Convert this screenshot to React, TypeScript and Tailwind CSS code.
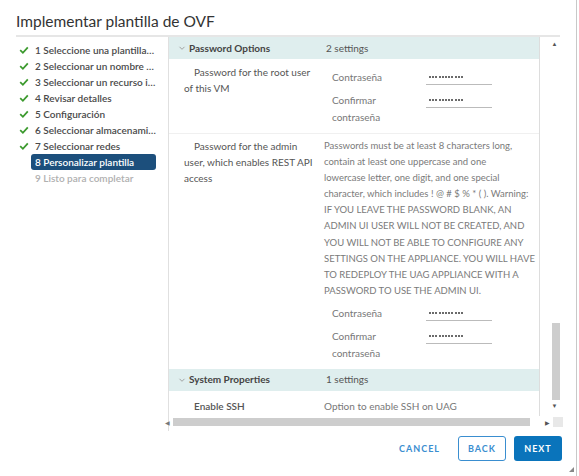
import React from "react";

const steps = [
  { label: "1 Seleccione una plantilla de OVF", done: true },
  { label: "2 Seleccionar un nombre y una carpeta", done: true },
  { label: "3 Seleccionar un recurso informático", done: true },
  { label: "4 Revisar detalles", done: true },
  { label: "5 Configuración", done: true },
  { label: "6 Seleccionar almacenamiento", done: true },
  { label: "7 Seleccionar redes", done: true },
  { label: "8 Personalizar plantilla", active: true },
  { label: "9 Listo para completar", pending: true },
];

const warning = [
  "Passwords must be at least 8 characters long,",
  "contain at least one uppercase and one",
  "lowercase letter, one digit, and one special",
  "character, which includes ! @ # $ % * ( ). Warning:",
  "IF YOU LEAVE THE PASSWORD BLANK, AN",
  "ADMIN UI USER WILL NOT BE CREATED, AND",
  "YOU WILL NOT BE ABLE TO CONFIGURE ANY",
  "SETTINGS ON THE APPLIANCE. YOU WILL HAVE",
  "TO REDEPLOY THE UAG APPLIANCE WITH A",
  "PASSWORD TO USE THE ADMIN UI.",
];

const Check = () => (
  <svg width="10" height="10" viewBox="0 0 10 10" className="shrink-0">
    <path d="M1.2 5.2 L3.9 7.8 L8.8 2.4" fill="none" stroke="#3c9a2e" strokeWidth="1.8" />
  </svg>
);

const Chevron = () => (
  <svg width="8" height="8" viewBox="0 0 8 8" className="shrink-0">
    <path d="M1.5 2.8 L4 5.3 L6.5 2.8" fill="none" stroke="#9a9a9a" strokeWidth="0.9" />
  </svg>
);

// masked value: eleven small dots
const Dots = () => (
  <div className="flex gap-[1.2px] pl-[3px] pt-[7px]">
    {Array.from({ length: 11 }).map((_, i) => (
      <div key={i} className="w-[2px] h-[2px] rounded-full bg-[#3a3a3a]" />
    ))}
  </div>
);

const PasswordField = ({ label, second }: { label: React.ReactNode; second?: boolean }) => (
  <div className={`flex items-start ${second ? "mt-[6px]" : ""}`}>
    <div className="w-[94px] leading-[17px] text-[#777]">{label}</div>
    <div className="w-[66px] h-[16px] border-b border-[#bbb]">
      <Dots />
    </div>
  </div>
);

const SectionHeader = ({ title, count }: { title: string; count: string }) => (
  <div className="flex items-center h-[22px] bg-[#dfeeee] pl-[9px]">
    <Chevron />
    <span className="ml-[3px] w-[137px] font-bold text-[#444]">{title}</span>
    <span className="text-[#555]">{count}</span>
  </div>
);

export default function App() {
  return (
    <div
      className="relative w-[579px] h-[476px] bg-white text-[10px] overflow-hidden"
      style={{ fontFamily: "Lato, 'Noto Sans', sans-serif" }}
    >
      <div className="w-[577px] h-full border-r border-[#c8c8c8] flex flex-col">
        {/* title */}
        <div className="pl-4 pr-[16px]">
          <div className="h-[37px] border-b-2 border-[#e6e6e6] pt-[11px] text-[15.5px] text-[#333] leading-[20px]">
            Implementar plantilla de OVF
          </div>
        </div>

        {/* body */}
        <div className="flex pl-4 pr-[16px] h-[394px]">
          {/* nav */}
          <div className="w-[153px] border-r border-[#e0e0e0] pt-[5px] shrink-0">
            {steps.map((s) => (
              <div key={s.label} className="flex items-center h-[16px]">
                <div className="w-[15px] pl-[3px] flex">{s.done && <Check />}</div>
                <div
                  className={`truncate w-[125px] h-[16px] leading-[16px] pl-[4px] rounded-[3px] font-semibold ${
                    s.active
                      ? "bg-[#1c4f7c] text-white"
                      : s.pending
                      ? "text-[#b0b0b0]"
                      : "text-[#4a4a4a]"
                  }`}
                >
                  {s.label}
                </div>
              </div>
            ))}
          </div>

          {/* content */}
          <div className="flex flex-col flex-1">
            <div className="flex flex-1 overflow-hidden">
              <div className="w-[371px] border-r border-[#ddd] overflow-hidden">
                <SectionHeader title="Password Options" count="2 settings" />

                <div className="flex pl-[15px] pt-[5px] pb-[7px] border-b border-[#f0f0f0]">
                  <div className="w-[140px] leading-[16px] text-[#555] indent-[10px] pr-[6px]">
                    Password for the root user of this VM
                  </div>
                  <div className="pt-[5px] pl-[8px]">
                    <PasswordField label="Contraseña" />
                    <PasswordField label={<>Confirmar<br />contraseña</>} second />
                  </div>
                </div>

                <div className="flex pl-[15px] pt-[4px] pb-[7px]">
                  <div className="w-[140px] leading-[16px] text-[#555] pr-[6px] whitespace-nowrap">
                    <span className="pl-[10px]">Password for the admin</span>
                    <br />
                    user, which enables REST API
                    <br />
                    access
                  </div>
                  <div className="w-[215px]">
                    <div className="leading-[16.1px] text-[9.5px] text-[#7a7a7a] whitespace-nowrap">
                      {warning.map((l) => (
                        <div key={l}>{l}</div>
                      ))}
                    </div>
                    <div className="pt-[6px] pl-[8px]">
                      <PasswordField label="Contraseña" />
                      <PasswordField label={<>Confirmar<br />contraseña</>} second />
                    </div>
                  </div>
                </div>

                <SectionHeader title="System Properties" count="1 settings" />
                <div className="flex pl-[25px] pt-[7px] leading-[16px]">
                  <div className="w-[130px] text-[#555] font-semibold">Enable SSH</div>
                  <div className="text-[#777]">Option to enable SSH on UAG</div>
                </div>
              </div>

              {/* vertical scrollbar */}
              <div className="w-[21px] flex flex-col items-center pt-[3px] pb-[6px]">
                <span className="text-[6px] leading-[8px] text-[#555] ml-[8px]">▲</span>
                <div className="flex-1 flex items-end justify-end w-full pr-[1px]">
                  <div className="w-[8px] h-[77px] bg-[#cdcdcd] mb-[2px]" />
                </div>
                <span className="text-[6px] leading-[8px] text-[#555] ml-[8px]">▼</span>
              </div>
            </div>

            {/* horizontal scrollbar */}
            <div className="flex items-center h-[12px] mb-[3px] -ml-[4px]">
              <span className="text-[6px] text-[#777] w-[8px]">◀</span>
              <div className="w-[357px] h-[8px] bg-[#cdcdcd]" />
              <span className="text-[6px] text-[#555] ml-[15px]">▶</span>
              <div className="w-[10px] h-[10px] bg-[#e8e8e8] ml-[3px]" />
            </div>
          </div>
        </div>

        {/* footer */}
        <div className="flex justify-end items-center gap-[8px] pr-[14px] pt-[5px]">
          <button className="h-[25px] px-[10px] text-[9px] font-bold tracking-[1px] text-[#3a8ed0]">CANCEL</button>
          <button className="h-[25px] w-[48px] rounded-[3px] border border-[#3a8ed0] text-[9px] font-bold tracking-[1px] text-[#3a8ed0] bg-white">
            BACK
          </button>
          <button className="h-[25px] w-[48px] rounded-[3px] bg-[#0a74bb] text-[9px] font-bold tracking-[1px] text-white">
            NEXT
          </button>
        </div>
      </div>
      <div className="absolute right-[5px] bottom-[4px] w-0 h-0 border-l-[5px] border-l-transparent border-b-[5px] border-b-[#888]" />
    </div>
  );
}
